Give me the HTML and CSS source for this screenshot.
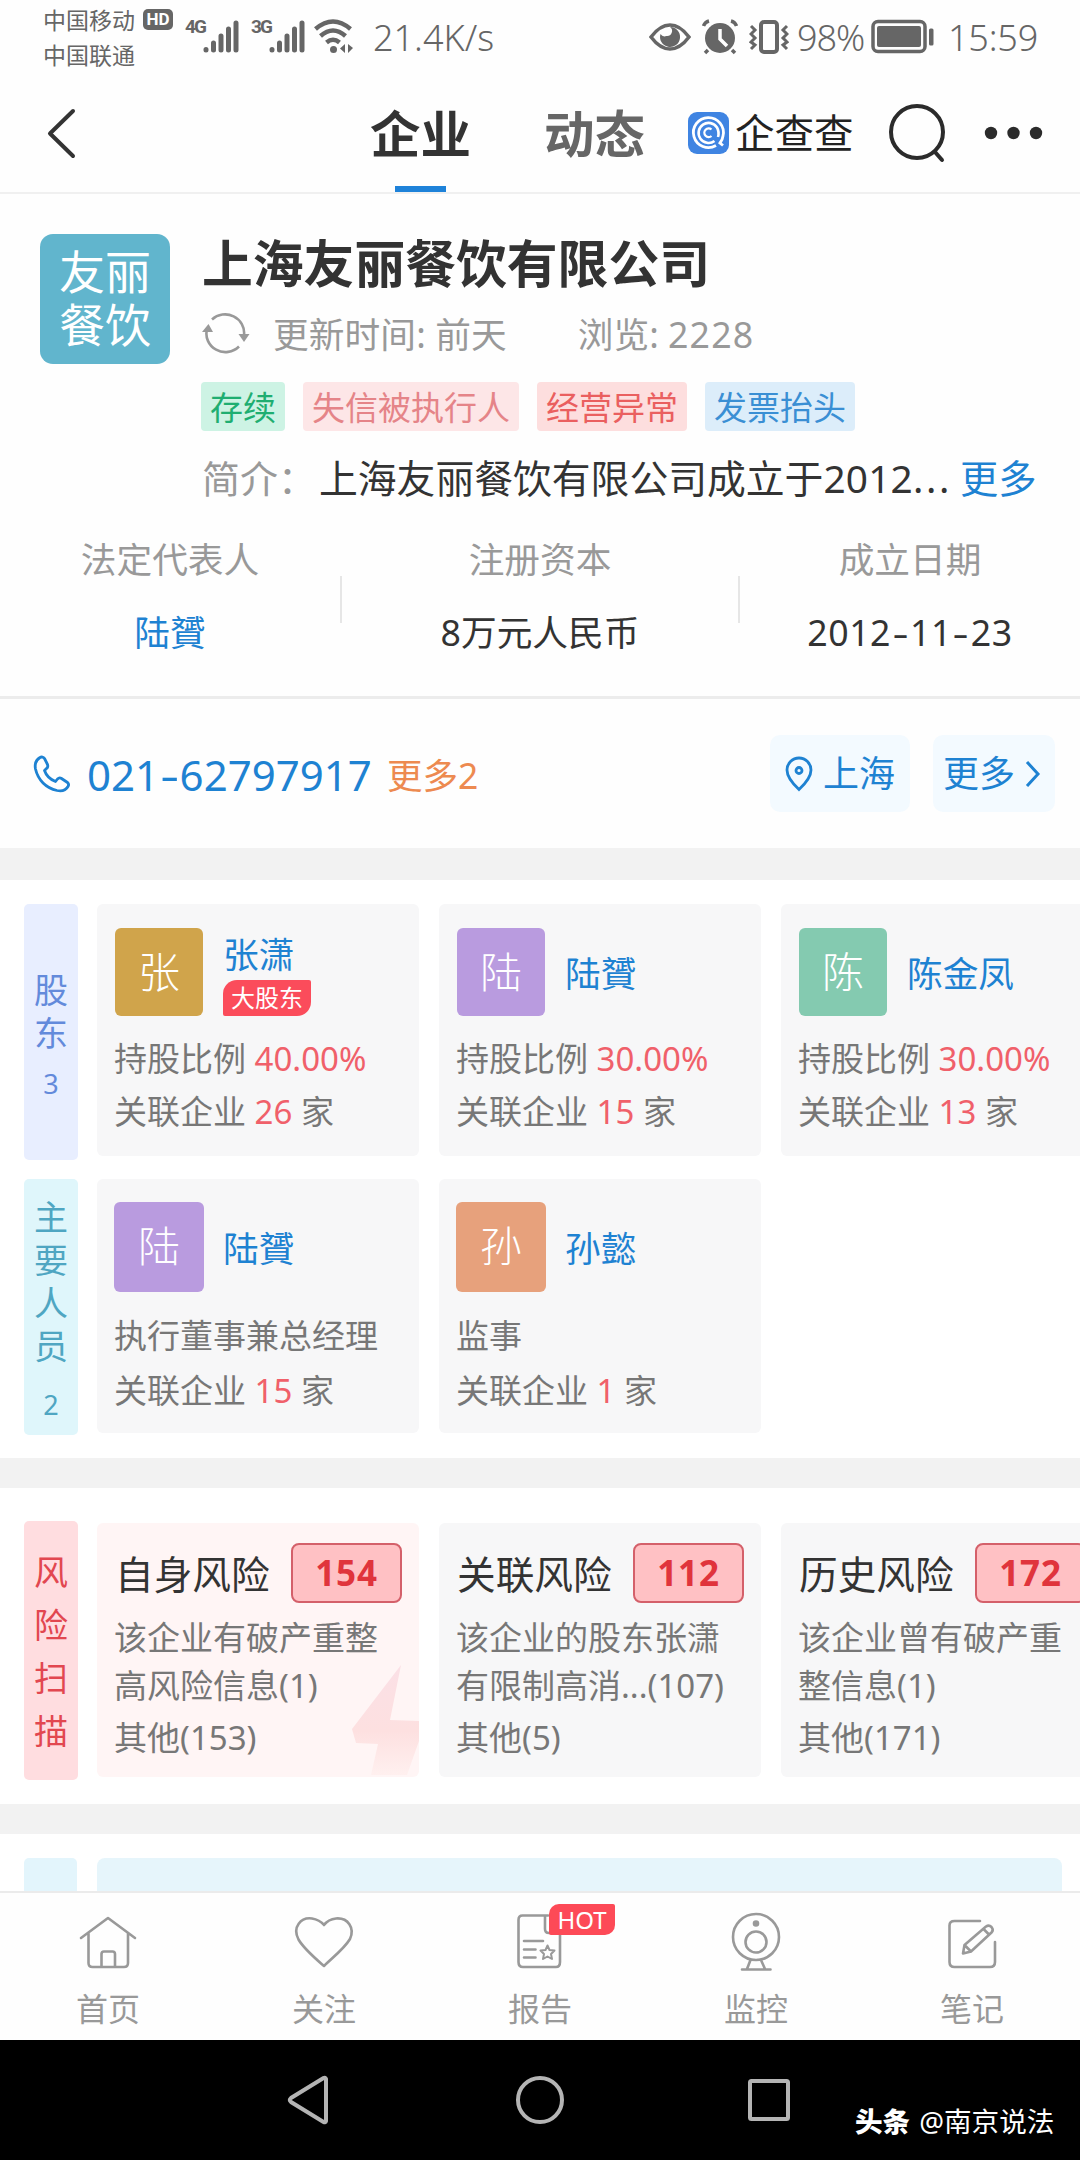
FILE: index.html
```html
<!DOCTYPE html>
<html lang="zh-CN">
<head>
<meta charset="utf-8">
<title>上海友丽餐饮有限公司</title>
<link rel="stylesheet" href="styles.css">
</head>
<body>
<div class="screen">
  <header class="status">
    <div class="carriers">
      <div class="carrier"><span>中国移动</span><span class="hd">HD</span></div>
      <div class="carrier"><span>中国联通</span></div>
    </div>
    <span class="net net-4g">4G</span>
    <svg class="bars" width="36" height="34" viewBox="0 0 36 34" stroke="#666" stroke-width="5" stroke-linecap="round"><path d="M3 30.5V31M10.500 24V31M18 17V31M25.500 10V31M33 4V31"/></svg>
    <span class="net net-3g">3G</span>
    <svg class="bars" width="36" height="34" viewBox="0 0 36 34" stroke="#666" stroke-width="5" stroke-linecap="round"><path d="M3 30.500V31M10.500 24V31M18 17V31M25.500 10V31M33 4V31"/></svg>
    <svg class="wifi" width="41" height="35" viewBox="0 0 41 35" fill="none" stroke="#666" stroke-width="4.500"><path d="M1.500 10Q19 -5 36.500 10M6.500 17Q19 6 31.500 17M12.500 23.500Q19 18 25.500 23.500"/><circle cx="19.500" cy="30.500" r="3.500" fill="#666" stroke="none"/><path d="M31 25v9l-5-4.500zM34 25v9l5-5z" fill="#666" stroke="none"/></svg>
    <span class="speed">21.4K/s</span>
    <span class="grow"></span>
    <svg class="eye" width="42" height="30" viewBox="0 0 42 30"><path d="M2 15Q11 3 21 3T40 15Q31 27 21 27T2 15Z" fill="none" stroke="#666" stroke-width="3.500"/><path d="M21 5a10 10 0 1 1-9.500 7a5 5 0 0 0 6 2a5 5 0 0 0 3.500-9z" fill="#666"/></svg>
    <svg class="alarm" width="36" height="36" viewBox="0 0 36 36"><circle cx="18" cy="19" r="15" fill="#666"/><path d="M1.500 7Q3 3 7 2M29 2Q33 3 34.500 7M6 31l-3 3M30 31l3 3" stroke="#666" stroke-width="3.500" fill="none"/><path d="M18 10v10l7 7" fill="none" stroke="#fff" stroke-width="3.500"/></svg>
    <svg class="vibrate" width="40" height="36" viewBox="0 0 40 36" fill="none" stroke="#666"><rect x="12" y="3" width="16" height="30" rx="3" stroke-width="4"/><path d="M2 7l4 4-4 4 4 4-4 4 4 3-4 4M38 7l-4 4 4 4-4 4 4 4-4 3 4 4" stroke-width="3"/></svg>
    <span class="percent">98%</span>
    <svg class="battery" width="63" height="36" viewBox="0 0 63 36"><rect x="2" y="2.500" width="52" height="30" rx="5" fill="none" stroke="#666" stroke-width="3.500"/><rect x="6" y="7" width="44" height="21" rx="2" fill="#666"/><rect x="58" y="9.500" width="4.500" height="17" rx="1.500" fill="#666"/></svg>
    <span class="clock">15:59</span>
  </header>

  <nav class="top">
    <svg class="back" width="30" height="52" viewBox="0 0 30 52" fill="none" stroke="#333" stroke-width="4" stroke-linecap="round" stroke-linejoin="round"><path d="M27 4L4 26.500L27 49"/></svg>
    <span class="tab tab-on">企业</span>
    <span class="tab">动态</span>
    <svg class="brand-icon" width="41" height="42" viewBox="0 0 41 42" fill="none" stroke="#fff"><rect width="41" height="42" rx="9" fill="#3f84e2" stroke="none"/><path d="M28 33.500A15 15 0 1 1 35 24Q34.500 28 32 31L35 33.500" stroke-width="2.800"/><path d="M26.500 29A10 10 0 1 1 29 15.500Q31.500 20 30 25" stroke-width="2.600"/><path d="M23.500 24A4.300 4.300 0 1 1 23.500 17.500" stroke-width="2.300"/></svg>
    <span class="brand">企查查</span>
    <svg class="search" width="60" height="62" viewBox="0 0 60 62" fill="none" stroke="#2b2b2b" stroke-width="4" stroke-linecap="round"><circle cx="29" cy="30" r="26"/><path d="M47 50l7 8"/></svg>
    <svg class="dots" width="60" height="14" viewBox="0 0 60 14" fill="#2b2b2b"><circle cx="7" cy="7" r="6.200"/><circle cx="29.500" cy="7" r="6.200"/><circle cx="52" cy="7" r="6.200"/></svg>
  </nav>

  <section class="company">
    <div class="logo">友丽<br>餐饮</div>
    <div class="company-main">
      <h1>上海友丽餐饮有限公司</h1>
      <div class="meta">
        <svg width="48" height="42" viewBox="0 0 48 42" fill="none" stroke="#999" stroke-width="2.600"><path d="M10 7.500A19 18.500 0 0 1 42 23M37 34.500A19 18.500 0 0 1 5 17"/><path d="M36.500 22h11l-5.500 8zM0 20h11l-4.500-8z" fill="#999" stroke="none"/></svg>
        <span class="updated">更新时间: 前天</span>
        <span class="views">浏览: <span>2228</span></span>
      </div>
      <div class="tags">
        <span class="tag tag-green">存续</span>
        <span class="tag tag-pink">失信被执行人</span>
        <span class="tag tag-red">经营异常</span>
        <span class="tag tag-blue">发票抬头</span>
      </div>
      <div class="intro"><span class="intro-label">简介：</span><span class="intro-text">上海友丽餐饮有限公司成立于<span class="year">2012<span class="ellipsis">...</span></span></span><span class="intro-more">更多</span></div>
    </div>
  </section>

  <section class="facts">
    <div class="fact"><span class="fact-label">法定代表人</span><span class="fact-value blue">陆贇</span></div>
    <div class="fact fact-mid"><span class="fact-label">注册资本</span><span class="fact-value">8万元人民币</span></div>
    <div class="fact"><span class="fact-label">成立日期</span><span class="fact-value date">2012<i>-</i>11<i>-</i>23</span></div>
  </section>

  <section class="contact">
    <svg class="phone" width="38" height="38" viewBox="0 0 38 38" fill="none" stroke="#1e82d2" stroke-width="2.800" stroke-linejoin="round"><path d="M7 2.500C3 5 1.500 9 2.500 14C5 25 13 33 24 35.500C29 36.500 33 35 35 31.500C36 30 35.500 28.500 34.500 27.500L28.500 23.500C27 22.500 25.500 23 24.500 24L22.500 26.500C17.500 24.500 13 20 11.500 15.500L13.500 13.500C15 12.500 15 11 14.500 9.500L11.500 3.500C10.500 2 8.500 1.500 7 2.500Z"/></svg>
    <span class="number">021<i>-</i>62797917</span>
    <span class="more2">更多2</span>
    <span class="grow"></span>
    <span class="pill pill-city"><svg width="28" height="36" viewBox="0 0 28 36" fill="none" stroke="#1e82d2" stroke-width="2.800"><path d="M14 33.500C7 27 2 21 2 14a12 12 0 0 1 24 0C26 21 21 27 14 33.500Z"/><circle cx="14" cy="14.500" r="3" /></svg>上海</span>
    <span class="pill pill-more">更多<svg width="16" height="30" viewBox="0 0 16 30" fill="none" stroke="#1e82d2" stroke-width="3"><path d="M2 3l11 12L2 27"/></svg></span>
  </section>

  <section class="block people">
    <div class="strip">
      <div class="side side-indigo"><span>股</span><span>东</span><small>3</small></div>
      <div class="card">
        <div class="who"><span class="avatar gold">张</span><span class="name">张潇<em>大股东</em></span></div>
        <p>持股比例 <b>40.00%</b></p><p>关联企业 <b>26</b> 家</p>
      </div>
      <div class="card">
        <div class="who"><span class="avatar purple">陆</span><span class="name">陆贇</span></div>
        <p>持股比例 <b>30.00%</b></p><p>关联企业 <b>15</b> 家</p>
      </div>
      <div class="card">
        <div class="who"><span class="avatar green">陈</span><span class="name">陈金凤</span></div>
        <p>持股比例 <b>30.00%</b></p><p>关联企业 <b>13</b> 家</p>
      </div>
    </div>
    <div class="strip strip-staff">
      <div class="side side-cyan"><span>主</span><span>要</span><span>人</span><span>员</span><small>2</small></div>
      <div class="card">
        <div class="who"><span class="avatar purple">陆</span><span class="name">陆贇</span></div>
        <p>执行董事兼总经理</p><p>关联企业 <b>15</b> 家</p>
      </div>
      <div class="card">
        <div class="who"><span class="avatar orange">孙</span><span class="name">孙懿</span></div>
        <p>监事</p><p>关联企业 <b>1</b> 家</p>
      </div>
    </div>
  </section>

  <section class="block risks">
    <div class="strip">
      <div class="side side-red"><span>风</span><span>险</span><span>扫</span><span>描</span></div>
      <div class="card risk risk-own">
        <svg class="bolt" width="70" height="114" viewBox="0 0 70 114"><defs><linearGradient id="fade" x1="0" y1="0" x2="0" y2="1"><stop offset="0" stop-color="#fbe0e6"/><stop offset=".6" stop-color="#fde0e0"/><stop offset="1" stop-color="#fff0ef"/></linearGradient></defs><path d="M52 2L3 66L7 80L29 81L22 112H58L70 78V58L41 57Z" fill="url(#fade)"/></svg>
        <h2>自身风险<b>154</b></h2>
        <p>该企业有破产重整<br>高风险信息(1)</p><p>其他(153)</p>
      </div>
      <div class="card risk">
        <h2>关联风险<b>112</b></h2>
        <p>该企业的股东张潇<br>有限制高消...(107)</p><p>其他(5)</p>
      </div>
      <div class="card risk">
        <h2>历史风险<b>172</b></h2>
        <p>该企业曾有破产重<br>整信息(1)</p><p>其他(171)</p>
      </div>
    </div>
  </section>

  <section class="block next"><div class="next-side"></div><div class="next-card"></div></section>

  <nav class="tabs">
    <div class="item"><svg width="64" height="64" viewBox="0 0 64 64"><path d="M5 26L32 6L59 26M12.500 21.500V51Q12.500 55 16.500 55H48Q52 55 52 51V21.500M25.500 55V42Q25.500 39.500 28 39.500H36.500Q39 39.500 39 42V55"/></svg><span>首页</span></div>
    <div class="item"><svg width="64" height="64" viewBox="0 0 64 64"><path d="M32 54C24 47 12 37 6.500 27.500C0 15 9 5 20 6.500C26 7.500 29 9.500 32 13C35 9 39 7 44 6.500C56 5.500 63 16 58 27C52 37 40 46 32 54Z"/></svg><span>关注</span></div>
    <div class="item"><svg width="64" height="64" viewBox="0 0 64 64"><path d="M40 3.500H14.500Q10.500 3.500 10.500 8V50Q10.500 55 15 55H48Q52 55 52 50V20M37 3.500V17Q37 21 41 21H46M16 29H35M16 37.500H27.500M16 45.500H27.500"/><path d="M39.500 33.500l2 4.500 5 .5-3.500 3.500 1 5-4.500-2.500-4.500 2.500 1-5-3.500-3.500 5-.5z" stroke-width="2"/></svg><em class="hot">HOT</em><span>报告</span></div>
    <div class="item"><svg width="64" height="64" viewBox="0 0 64 64"><circle cx="32" cy="25" r="23"/><circle cx="32" cy="30" r="10.500"/><circle cx="32" cy="11.500" r="2" fill="#999"/><path d="M26.500 48L23 57M37 48L41 57M18 57.500H46.500"/></svg><span>监控</span></div>
    <div class="item"><svg width="64" height="64" viewBox="0 0 64 64"><path d="M40 9H14.500Q9.500 9 9.500 13.500V50Q9.500 55 14.500 55H50Q55 55 55 50V30"/><path d="M23 41.500L24.500 33L46 14.500Q49 12.500 51.500 15Q54 18 51.500 20.500L31 39.500ZM24.500 33L31 39.500M43.500 17L49 22.500"/></svg><span>笔记</span></div>
  </nav>

  <footer class="system">
    <svg class="sys-back" width="46" height="52" viewBox="0 0 46 52"><path d="M41 5V47Q40.500 49 38.500 48L6 28Q3.500 26 6 24L38.500 4Q40.500 3 41 5Z"/></svg>
    <svg class="sys-home" width="52" height="52" viewBox="0 0 52 52"><circle cx="26" cy="26" r="22"/></svg>
    <svg class="sys-recent" width="46" height="46" viewBox="0 0 46 46"><rect x="4" y="4" width="38" height="38" rx="1.500"/></svg>
    <div class="credit"><b>头条</b><span>@南京说法</span></div>
  </footer>
</div>
</body>
</html>
```
FILE: styles.css
```css
* { box-sizing: border-box; margin: 0; padding: 0; }
body { background: #fff; }
svg { display: block; flex: none; }
em, i { font-style: normal; }
.screen {
  width: 1080px; height: 2160px; overflow: hidden;
  display: flex; flex-direction: column;
  background: #fefefe; color: #333;
  font-family: "Noto Sans", "Noto Sans CJK SC", sans-serif;
  white-space: nowrap;
}
.screen > * { flex: none; }
.grow { flex: 1; }
.blue { color: #1e82d2; }

.status { height: 74px; padding: 0 42px 0 43px; display: flex; color: #666; }
.status svg { margin-top: 19px; }
.status .eye { margin-top: 22px; }
.carriers { width: 142px; padding-top: 2px; }
.carrier { height: 35px; line-height: 34px; font-size: 23px; display: flex; align-items: center; gap: 8px; }
.hd { width: 30px; height: 21px; border-radius: 5px; background: #666; color: #fff; font: bold 17px/21px "Roboto", sans-serif; text-align: center; }
.net { width: 18px; padding-top: 16px; font: bold 19px/22px "Roboto", sans-serif; letter-spacing: -2px; }
.net-3g { margin-left: 12px; }
.wifi { margin-left: 9px; }
.speed, .percent, .clock { font-size: 36px; line-height: 40px; padding-top: 18px; font-weight: 300; }
.speed { margin-left: 18px; letter-spacing: 0; }
.status .alarm { margin-left: 11px; }
.status .vibrate { margin-left: 11px; }
.percent { margin-left: 8px; width: 68px; letter-spacing: -1px; }
.status .battery { margin-left: 6px; }
.clock { margin-left: 14px; width: 90px; letter-spacing: -.2px; }

.top { height: 120px; border-bottom: 2px solid #f0f0f0; padding-left: 46px; display: flex; align-items: center; }
.back { margin-right: 294px; }
.tab { height: 118px; width: 101px; line-height: 119px; font-size: 50.500px; font-weight: 700; color: #666; }
.tab-on { color: #333; margin-right: 73px; background: linear-gradient(#1e82d9, #1e82d9) 25px 100% / 51px 6px no-repeat; }
.brand-icon { margin-left: 43px; }
.brand { margin-left: 6px; width: 120px; font-size: 39.500px; font-weight: 400; line-height: 50px; color: #222; }
.search { margin-left: 33px; }
.dots { margin-left: 36px; }

.company { height: 327px; padding: 40px 0 0 40px; display: flex; }
.logo { width: 130px; height: 130px; border-radius: 13px; background: #61b5cd; color: #fff; font-family: "Liberation Sans", "Noto Sans CJK SC", sans-serif; font-size: 46px; line-height: 53px; padding-top: 13px; text-align: center; }
.company-main { margin-left: 32px; flex: 1; }
h1 { font-size: 50.800px; line-height: 60px; }
.meta { height: 80px; display: flex; align-items: center; font-size: 35.700px; line-height: 50px; color: #999; }
.meta svg { margin-top: -3px; }
.updated { margin: 0 71px 0 23px; letter-spacing: .1px; }
.views span { letter-spacing: 1.200px; }
.tags { height: 50px; display: flex; gap: 18px; margin: 8px 0 0 -1px; }
.tag { height: 49px; line-height: 51px; padding: 0 9px; font-size: 33px; border-radius: 4px; }
.tag-green { background: #cdf3e4; color: #1fae71; }
.tag-pink { background: #fde6e7; color: #e58488; }
.tag-red { background: #fddede; color: #ea5f5f; }
.tag-blue { background: #dcedfa; color: #3a8fd4; }
.intro { height: 91px; line-height: 60px; display: flex; align-items: center; font-size: 38.800px; }
.intro-label { width: 117px; color: #999; font-size: 38px; }
.intro-text { width: 641px; }
.year { letter-spacing: .2px; }
.ellipsis { letter-spacing: 2.600px; }
.intro-more { color: #1e82d2; font-size: 38.300px; }

.facts { height: 178px; border-bottom: 3px solid #ececec; display: flex; font-size: 35.700px; }
.fact { width: 340px; display: flex; flex-direction: column; align-items: center; line-height: 73px; padding-top: 2px; }
.fact-mid { width: 400px; background: linear-gradient(#e6e6e6, #e6e6e6) 0 55px / 2px 47px no-repeat, linear-gradient(#e6e6e6, #e6e6e6) 100% 55px / 2px 47px no-repeat; }
.fact-label { color: #999; }
.date { letter-spacing: .5px; }
.date i, .number i { display: inline-block; transform: scaleX(1.4); margin: 0 3.500px; }

.contact { height: 149px; padding: 0 25px 0 33px; display: flex; align-items: center; color: #1e82d2; }
.number { margin-left: 16px; width: 300px; padding-top: 2px; font-size: 42px; letter-spacing: 0; }
.more2 { font-size: 35.500px; color: #ed8a50; }
.pill { height: 77px; border-radius: 10px; background: #f3faff; display: flex; align-items: center; font-size: 36px; line-height: 50px; }
.pill-city { width: 140px; padding-left: 15px; gap: 10px; }
.pill-more { width: 122px; margin-left: 23px; padding-left: 10px; gap: 10px; }

.block { border-top: 30px solid #f2f2f2; background: #fff; padding-left: 24px; }
.strip { display: flex; height: 256px; }
.side { flex: none; width: 54px; margin-right: 19px; border-radius: 5px; display: flex; flex-direction: column; align-items: center; font-size: 34px; }
.side span { line-height: 43px; }
.side small { font-size: 27px; line-height: 40px; }
.side-indigo { background: #e8eeff; color: #638adb; padding-top: 65px; }
.side-indigo small { margin-top: 9px; }
.side-cyan { background: #dff6fb; color: #4fa6c2; padding-top: 17px; }
.side-cyan small { margin-top: 17px; }
.side-red { background: #ffdde0; color: #e24750; padding-top: 25px; }
.side-red span { line-height: 53px; }
.card { flex: none; width: 322px; height: 252px; margin-right: 20px; padding-left: 18px; border-radius: 6px; background: #f7f7f8; position: relative; }
.card p { margin-left: -1px; font-size: 33px; line-height: 53px; color: #777; }
.card p b { font-weight: 400; color: #f0606a; }
.who { height: 112px; padding-top: 24px; margin-bottom: 16px; display: flex; gap: 20px; }
.avatar { flex: none; width: 88px; height: 88px; border-radius: 6px; color: #fff; font-size: 42px; font-weight: 300; line-height: 88px; text-align: center; }
.gold { background: #d0a44b; }
.purple { background: #b99bdf; }
.green { background: #84cab0; }
.orange { background: #e7a17c; }
.name { display: flex; flex-direction: column; justify-content: center; font-size: 35.700px; line-height: 48px; color: #1e82d2; padding-top: 2px; }
.name em { margin-top: 2px; width: 88px; height: 36px; border-radius: 14px 2px 14px 2px; background: #fb4c5b; color: #fff; font-size: 24px; line-height: 36px; text-align: center; }
.people { height: 610px; border-top-width: 32px; padding-top: 24px; }
.people .name { height: 88px; }
.strip-staff { margin-top: 19px; height: 256px; }
.strip-staff .card { height: 254px; }
.strip-staff .who { margin-bottom: 17px; padding-top: 23px; }
.strip-staff .avatar { height: 90px; width: 90px; margin: 0 -1px; }
.strip-staff .name { height: 90px; }
.strip-staff p { line-height: 55px; }

.risks { height: 346px; padding-top: 33px; }
.risks .strip { height: 259px; }
.risk { margin-top: 2px; height: 254px; }
.risk-own { background: #fff5f5; }
.risk h2 { height: 91px; padding-top: 20px; display: flex; justify-content: space-between; width: 287px; font-size: 38.700px; font-weight: 400; line-height: 63px; position: relative; }
.risk h2 b { width: 111px; height: 60px; border: 2px solid #d4606a; border-radius: 8px; background: #ffc1c4; color: #e0343c; font-size: 35px; line-height: 56px; text-align: center; letter-spacing: .8px; }
.risk p { line-height: 48px; position: relative; margin-bottom: 4px; }
.bolt { position: absolute; right: 0; bottom: 0; }

.next { height: 87px; padding-top: 24px; display: flex; gap: 20px; }
.next-side { width: 53px; background: #e3f5fc; border-radius: 5px 5px 0 0; }
.next-card { width: 965px; background: #e6f5fb; border-radius: 8px 8px 0 0; }

.tabs { height: 149px; border-top: 2px solid #ebebeb; display: flex; background: #fefefe; color: #999; }
.item { flex: 1; display: flex; flex-direction: column; align-items: center; padding-top: 19px; font-size: 32px; line-height: 66px; position: relative; }
.item svg { fill: none; stroke: #999; stroke-width: 2.600; stroke-linecap: round; stroke-linejoin: round; }
.hot { position: absolute; left: 117px; top: 11px; width: 66px; height: 31px; border-radius: 10px 2px 10px 2px; background: #fd4a57; color: #fff; font-size: 24px; line-height: 31px; text-align: center; }

.system { height: 120px; background: #000; display: flex; align-items: center; padding-left: 285px; }
.system svg { fill: none; stroke: #b4b4b4; stroke-width: 4; }
.sys-home { margin-left: 183px; }
.sys-recent { margin-left: 180px; }
.credit { margin: 41px 0 0 63px; display: flex; gap: 9px; color: #fff; font-size: 27.600px; line-height: 40px; }
.credit b { font-weight: 900; }
```
